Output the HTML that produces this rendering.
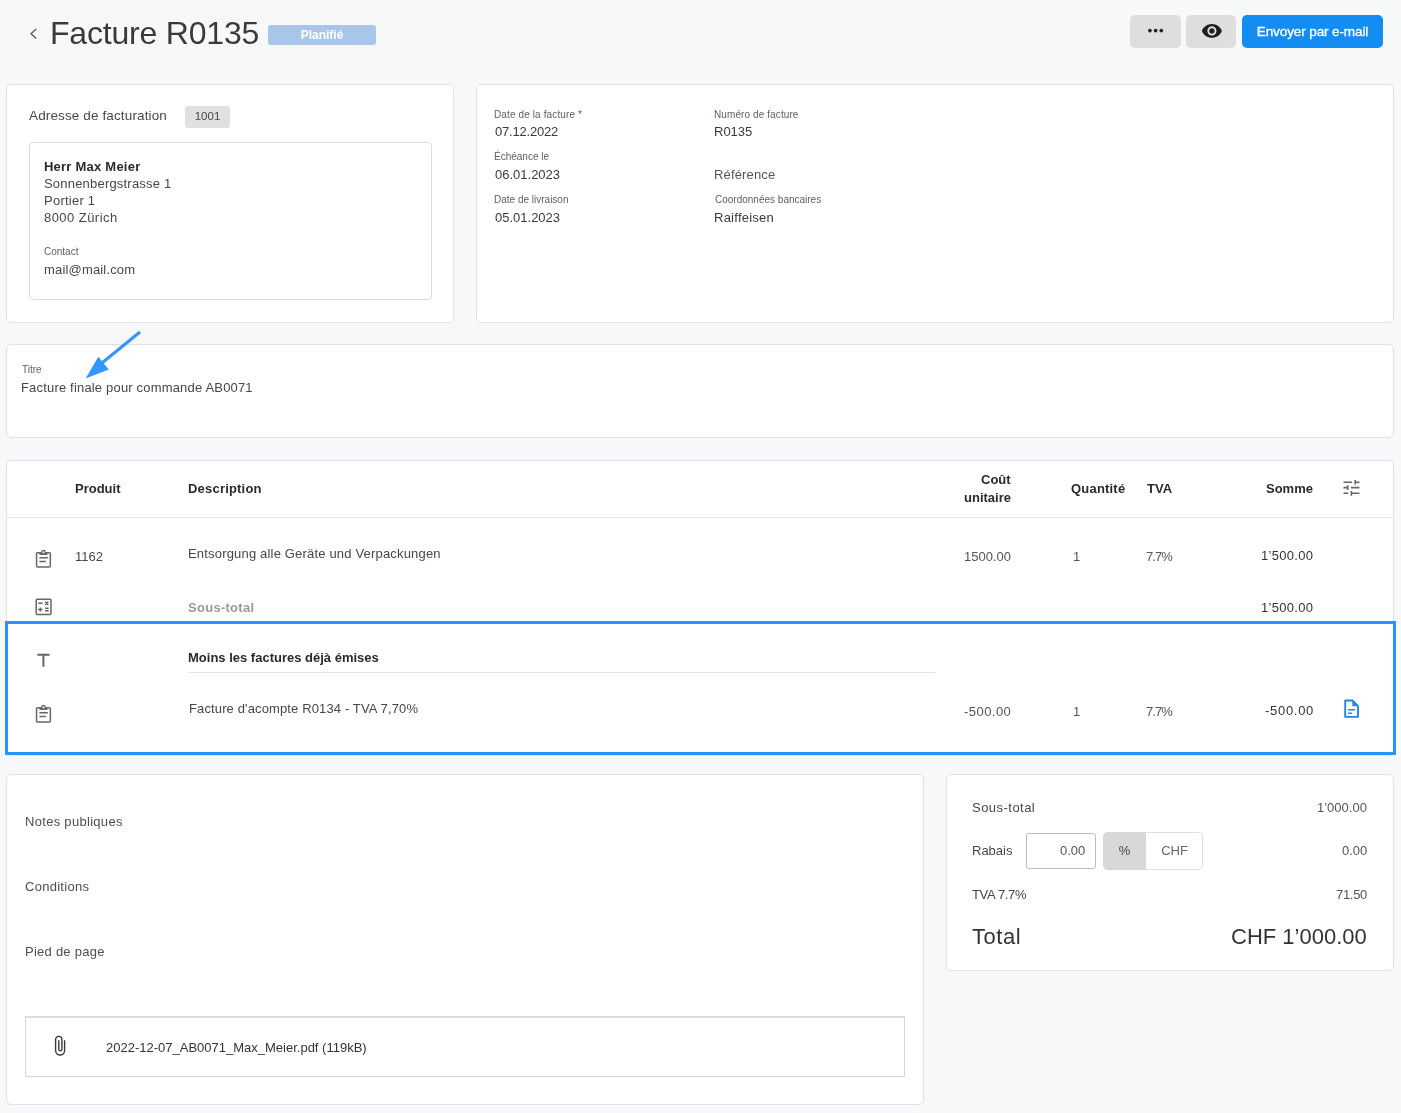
<!DOCTYPE html>
<html><head><meta charset="utf-8"><title>Facture R0135</title>
<style>
html,body{margin:0;padding:0;}
body{width:1401px;height:1113px;overflow:hidden;position:relative;background:#f7f8fa;font-family:"Liberation Sans", sans-serif;}
.t{position:absolute;line-height:1;white-space:nowrap;will-change:transform;}
.r{position:absolute;}
</style></head><body>
<svg class="r" style="left:28px;top:26px" width="12" height="16" viewBox="0 0 12 16"><path d="M8.2 3.1 L3 7.75 L8.2 12.4" fill="none" stroke="#555" stroke-width="1.3"/></svg>
<div class="t" style="top:17.21px;font-size:32px;color:#3a3a3a;letter-spacing:-0.2px;left:50px;">Facture R0135</div>
<div class="r" style="left:268px;top:25px;width:108px;height:20px;background:#a7c6ea;border-radius:3px;"></div>
<div class="t" style="top:28.84px;font-size:12px;color:#fff;font-weight:700;right:1079.00px;width:108px;left:268px;text-align:center;">Planifié</div>
<div class="r" style="left:1130px;top:15px;width:51px;height:33px;background:#dedede;border-radius:5px;"></div>
<svg class="r" style="left:1140px;top:20px" width="30" height="20" viewBox="1140 20 30 20" fill="#222"><circle cx="1149.9" cy="30.6" r="1.85"/><circle cx="1155.6" cy="30.6" r="1.85"/><circle cx="1161.3" cy="30.6" r="1.85"/></svg>
<div class="r" style="left:1186px;top:15px;width:50px;height:33px;background:#dedede;border-radius:5px;"></div>
<svg class="r" style="left:1200.6px;top:19.75px" width="21.8" height="21.8" viewBox="0 0 24 24"><path fill="#1e1e1e" d="M12 4.5C7 4.5 2.73 7.61 1 12c1.73 4.39 6 7.5 11 7.5s9.27-3.11 11-7.5c-1.73-4.39-6-7.5-11-7.5zM12 17c-2.76 0-5-2.24-5-5s2.24-5 5-5 5 2.24 5 5-2.24 5-5 5zm0-8c-1.66 0-3 1.34-3 3s1.34 3 3 3 3-1.34 3-3-1.34-3-3-3z"/></svg>
<div class="r" style="left:1242px;top:15px;width:141px;height:33px;background:#138df2;border-radius:5px;"></div>
<div class="t" style="top:24.88px;font-size:13.6px;color:#fff;letter-spacing:-0.15px;right:88.65px;width:141px;left:1242px;text-align:center;-webkit-text-stroke:0.3px #fff;">Envoyer par e-mail</div>
<div class="r" style="left:6px;top:84px;width:448px;height:239px;background:#fff;border:1px solid #dfe3e8;border-radius:5px;box-sizing:border-box;"></div>
<div class="t" style="top:109.07px;font-size:13.5px;color:#474747;letter-spacing:0.13px;left:29px;">Adresse de facturation</div>
<div class="r" style="left:185px;top:106px;width:45px;height:22px;background:#e0e0e0;border-radius:3px;"></div>
<div class="t" style="top:110.76px;font-size:11.5px;color:#474747;right:1193.50px;width:45px;left:185px;text-align:center;">1001</div>
<div class="r" style="left:29px;top:142px;width:403px;height:158px;background:#fff;border:1px solid #dcdcdc;border-radius:4px;box-sizing:border-box;"></div>
<div class="t" style="top:159.99px;font-size:13px;color:#2a2a2a;font-weight:700;letter-spacing:0.23px;left:44px;">Herr Max Meier</div>
<div class="t" style="top:176.99px;font-size:13px;color:#474747;letter-spacing:0.2px;left:44px;">Sonnenbergstrasse 1</div>
<div class="t" style="top:193.99px;font-size:13px;color:#474747;letter-spacing:0.24px;left:44px;">Portier 1</div>
<div class="t" style="top:211.49px;font-size:13px;color:#474747;letter-spacing:0.45px;left:44px;">8000 Zürich</div>
<div class="t" style="top:247.33px;font-size:10px;color:#5b6168;left:44px;">Contact</div>
<div class="t" style="top:262.99px;font-size:13px;color:#474747;letter-spacing:0.17px;left:44px;">mail@mail.com</div>
<div class="r" style="left:476px;top:84px;width:918px;height:239px;background:#fff;border:1px solid #dfe3e8;border-radius:5px;box-sizing:border-box;"></div>
<div class="t" style="top:109.53px;font-size:10px;color:#5b6168;letter-spacing:0.12px;left:494.4px;">Date de la facture *</div>
<div class="t" style="top:124.59px;font-size:13px;color:#3a3a3a;letter-spacing:-0.2px;left:495px;">07.12.2022</div>
<div class="t" style="top:152.23px;font-size:10px;color:#5b6168;left:494.4px;">Échéance le</div>
<div class="t" style="top:167.79px;font-size:13px;color:#3a3a3a;left:495px;">06.01.2023</div>
<div class="t" style="top:195.13px;font-size:10px;color:#5b6168;left:494.4px;">Date de livraison</div>
<div class="t" style="top:210.79px;font-size:13px;color:#3a3a3a;left:495px;">05.01.2023</div>
<div class="t" style="top:109.53px;font-size:10px;color:#5b6168;letter-spacing:0.1px;left:714.2px;">Numéro de facture</div>
<div class="t" style="top:124.59px;font-size:13px;color:#3a3a3a;left:714.2px;">R0135</div>
<div class="t" style="top:167.79px;font-size:13px;color:#555;letter-spacing:0.15px;left:714.2px;">Référence</div>
<div class="t" style="top:195.13px;font-size:10px;color:#5b6168;left:715px;">Coordonnées bancaires</div>
<div class="t" style="top:210.79px;font-size:13px;color:#3a3a3a;letter-spacing:0.25px;left:714.2px;">Raiffeisen</div>
<div class="r" style="left:6px;top:344px;width:1388px;height:94px;background:#fff;border:1px solid #dfe3e8;border-radius:5px;box-sizing:border-box;"></div>
<div class="t" style="top:365.13px;font-size:10px;color:#5b6168;left:22px;">Titre</div>
<div class="t" style="top:381.19px;font-size:13px;color:#474747;letter-spacing:0.18px;left:21.2px;">Facture finale pour commande AB0071</div>
<svg class="r" style="left:0;top:320px" width="200" height="80" viewBox="0 320 200 80"><line x1="140" y1="332" x2="97" y2="367" stroke="#3597fc" stroke-width="3.2" stroke-linecap="butt"/><polygon points="85.6,378.4 98.3,356.8 108.9,369.6" fill="#3597fc"/></svg>
<div class="r" style="left:6px;top:460px;width:1388px;height:296px;background:#fff;border:1px solid #dfe3e8;border-radius:5px;box-sizing:border-box;"></div>
<div class="r" style="left:7px;top:517px;width:1386px;height:1px;background:#e3e5e8;"></div>
<div class="t" style="top:481.79px;font-size:13px;color:#2a2a2a;font-weight:700;left:75px;">Produit</div>
<div class="t" style="top:481.79px;font-size:13px;color:#2a2a2a;font-weight:700;letter-spacing:0.2px;left:188.3px;">Description</div>
<div class="t" style="top:472.99px;font-size:13px;color:#2a2a2a;font-weight:700;right:390.00px;">Coût</div>
<div class="t" style="top:490.99px;font-size:13px;color:#2a2a2a;font-weight:700;right:390.00px;">unitaire</div>
<div class="t" style="top:481.79px;font-size:13px;color:#2a2a2a;font-weight:700;letter-spacing:0.2px;left:1070.5px;">Quantité</div>
<div class="t" style="top:481.79px;font-size:13px;color:#2a2a2a;font-weight:700;left:1146.5px;">TVA</div>
<div class="t" style="top:481.79px;font-size:13px;color:#2a2a2a;font-weight:700;right:88.00px;">Somme</div>
<svg class="r" style="left:1340px;top:477px" width="24" height="22" viewBox="1340 477 24 22" fill="none" stroke="#666" stroke-width="1.6"><path d="M1343.5 482.3H1352M1355.2 480V484.6M1355.2 482.3H1359.5M1343.5 487.6H1347.7M1347.7 485.3V489.9M1351 487.6H1359.5M1343.5 493.3H1348.2M1351.4 491V495.7M1351.4 493.3H1359.5"/></svg>
<svg class="r" style="left:35px;top:549px" width="18" height="20" viewBox="0 0 18 20" fill="none" stroke="#666" stroke-width="1.5"><rect x="1.55" y="3.65" width="13.8" height="14.3" rx="1"/><path d="M4.4 5H12.5" stroke-width="1.9"/><circle cx="8.45" cy="3.2" r="1.7" fill="#fff" stroke-width="1.3"/><path d="M4.4 8.8H12.9M4.4 12.5H10.9"/></svg>
<div class="t" style="top:550.39px;font-size:13px;color:#474747;left:75px;">1162</div>
<div class="t" style="top:546.99px;font-size:13px;color:#474747;letter-spacing:0.18px;left:188.3px;">Entsorgung alle Geräte und Verpackungen</div>
<div class="t" style="top:550.49px;font-size:13px;color:#555;right:390.00px;">1500.00</div>
<div class="t" style="top:550.49px;font-size:13px;color:#555;left:1072.6px;">1</div>
<div class="t" style="top:550.49px;font-size:13px;color:#555;letter-spacing:-0.9px;left:1145.6px;">7.7%</div>
<div class="t" style="top:548.99px;font-size:13px;color:#333;letter-spacing:0.3px;right:87.70px;">1’500.00</div>
<svg class="r" style="left:35px;top:598px" width="18" height="18" viewBox="0 0 18 18" fill="none" stroke="#666" stroke-width="1.5"><rect x="1.2" y="1.2" width="14.8" height="15.4" rx="1"/><path d="M3.2 5.3H7.5M10.2 3.7L13.3 6.9M13.3 3.7L10.2 6.9M3.2 11.5H7.5M5.35 9.4V13.6M10.1 10.2H13.6M10.1 12.7H13.6" stroke-width="1.5"/></svg>
<div class="t" style="top:601.49px;font-size:13px;color:#9a9a9a;font-weight:700;letter-spacing:0.28px;left:188.3px;">Sous-total</div>
<div class="t" style="top:600.99px;font-size:13px;color:#333;letter-spacing:0.3px;right:87.70px;">1’500.00</div>
<svg class="r" style="left:35px;top:650px" width="18" height="20" viewBox="0 0 18 20" fill="none" stroke="#666" stroke-width="2"><path d="M2.4 4.8H14.6M8.4 4.8V16.8"/></svg>
<div class="t" style="top:651.49px;font-size:13px;color:#2a2a2a;font-weight:700;left:188.3px;">Moins les factures déjà émises</div>
<div class="r" style="left:189px;top:672px;width:746px;height:1px;background:#e1e3e7;"></div>
<svg class="r" style="left:35px;top:704px" width="18" height="20" viewBox="0 0 18 20" fill="none" stroke="#666" stroke-width="1.5"><rect x="1.55" y="3.65" width="13.8" height="14.3" rx="1"/><path d="M4.4 5H12.5" stroke-width="1.9"/><circle cx="8.45" cy="3.2" r="1.7" fill="#fff" stroke-width="1.3"/><path d="M4.4 8.8H12.9M4.4 12.5H10.9"/></svg>
<div class="t" style="top:701.69px;font-size:13px;color:#474747;letter-spacing:0.13px;left:188.8px;">Facture d'acompte R0134 - TVA 7,70%</div>
<div class="t" style="top:705.39px;font-size:13px;color:#555;letter-spacing:0.45px;right:389.55px;">-500.00</div>
<div class="t" style="top:705.39px;font-size:13px;color:#555;left:1072.6px;">1</div>
<div class="t" style="top:705.39px;font-size:13px;color:#555;letter-spacing:-0.9px;left:1145.6px;">7.7%</div>
<div class="t" style="top:703.99px;font-size:13px;color:#333;letter-spacing:0.7px;right:87.30px;">-500.00</div>
<svg class="r" style="left:1342px;top:698px" width="20" height="22" viewBox="1342 698 20 22"><path d="M1345.2 700.5H1352.5L1358 706V716.9H1345.2Z" fill="none" stroke="#1a88ee" stroke-width="1.9" stroke-linejoin="round"/><path d="M1352.3 700.5V706.2H1358Z" fill="#1a88ee"/><path d="M1348.6 709.7H1354.6M1348.6 713.2H1351.4" stroke="#1a88ee" stroke-width="1.6" stroke-linecap="round"/></svg>
<div class="r" style="left:5px;top:621px;width:1391px;height:134px;border:3px solid #2892fe;box-sizing:border-box;"></div>
<div class="r" style="left:6px;top:774px;width:918px;height:331px;background:#fff;border:1px solid #dfe3e8;border-radius:5px;box-sizing:border-box;"></div>
<div class="t" style="top:814.99px;font-size:13px;color:#4a4f56;letter-spacing:0.3px;left:24.6px;">Notes publiques</div>
<div class="t" style="top:880.29px;font-size:13px;color:#4a4f56;letter-spacing:0.28px;left:24.6px;">Conditions</div>
<div class="t" style="top:945.29px;font-size:13px;color:#4a4f56;letter-spacing:0.25px;left:24.6px;">Pied de page</div>
<div class="r" style="left:25px;top:1016px;width:880px;height:61px;border:1px solid #d6d6d6;border-top:2px solid #dcdcdc;box-sizing:border-box;background:#fff;"></div>
<svg class="r" style="left:50.5px;top:1032px" width="18" height="28" viewBox="50 1032 18 28" fill="none" stroke="#3a3a3a" stroke-width="1.4"><path d="M63.6 1040.3V1050.5A4.5 4.5 0 0 1 54.6 1050.5V1039.5A3.15 3.15 0 0 1 60.9 1039.5V1049.2A1.55 1.55 0 0 1 57.8 1049.2V1040.3"/></svg>
<div class="t" style="top:1040.99px;font-size:13px;color:#333;left:106px;">2022-12-07_AB0071_Max_Meier.pdf (119kB)</div>
<div class="r" style="left:946px;top:774px;width:448px;height:197px;background:#fff;border:1px solid #dfe3e8;border-radius:5px;box-sizing:border-box;"></div>
<div class="t" style="top:800.89px;font-size:13px;color:#474747;letter-spacing:0.47px;left:972px;">Sous-total</div>
<div class="t" style="top:800.89px;font-size:13px;color:#555;right:34.00px;">1’000.00</div>
<div class="t" style="top:843.79px;font-size:13px;color:#474747;left:972px;">Rabais</div>
<div class="r" style="left:1026px;top:833px;width:70px;height:36px;border:1px solid #bdbdbd;border-radius:3px;box-sizing:border-box;background:#fff;"></div>
<div class="t" style="top:844.49px;font-size:13px;color:#555;right:316.00px;">0.00</div>
<div class="r" style="left:1103px;top:832px;width:100px;height:38px;border:1px solid #e0e0e0;border-radius:5px;box-sizing:border-box;background:#fff;overflow:hidden;"></div>
<div class="r" style="left:1103px;top:832px;width:43px;height:38px;background:#d8d8d8;border-radius:5px 0 0 5px;"></div>
<div class="t" style="top:844.49px;font-size:13px;color:#474747;right:276.50px;width:43px;left:1103px;text-align:center;">%</div>
<div class="t" style="top:844.49px;font-size:13px;color:#666;right:226.50px;width:57px;left:1146px;text-align:center;">CHF</div>
<div class="t" style="top:843.79px;font-size:13px;color:#555;right:34.00px;">0.00</div>
<div class="t" style="top:887.79px;font-size:13px;color:#474747;letter-spacing:-0.33px;left:972px;">TVA 7.7%</div>
<div class="t" style="top:887.79px;font-size:13px;color:#555;letter-spacing:-0.3px;right:34.30px;">71.50</div>
<div class="t" style="top:926.17px;font-size:22px;color:#333;letter-spacing:0.55px;left:972px;">Total</div>
<div class="t" style="top:926.17px;font-size:22px;color:#333;right:34.00px;">CHF 1’000.00</div>
</body></html>
